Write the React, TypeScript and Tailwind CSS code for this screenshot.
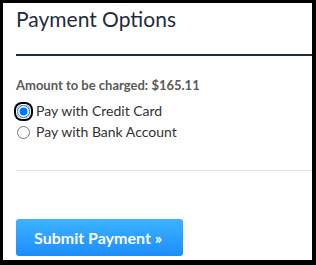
const App = () => {
  return (
    <div className="w-[316px] h-[265px] bg-black pt-[3px] pl-[3px] pr-[4px] pb-[5px] font-['Lato',sans-serif]">
      <div className="h-full bg-white pl-[13px] pt-[4px]">
        {/* Heading */}
        <h2 className="text-[21px] leading-[24px] text-[#1f2d3b] pb-[23px] border-b-2 border-[#1f2d3b]">
          Payment Options
        </h2>

        {/* Amount + methods */}
        <div className="mt-[21px] pb-[31px] border-b border-[#e3e3e3]">
          <p className="text-[13px] leading-[16px] font-bold text-[#5a5a5a]">
            Amount to be charged: $165.11
          </p>
          <div className="mt-[11px] flex flex-col gap-[7px] text-[14px] leading-[14px] text-[#333]">
            <label className="flex items-center gap-[6px] pl-[1px]">
              <span className="flex rounded-[5px] ring-2 ring-black ring-offset-[1px]">
                <input
                  type="radio"
                  name="method"
                  defaultChecked
                  className="m-0 w-[13px] h-[13px] accent-[#0075ff] outline-none"
                />
              </span>
              Pay with Credit Card
            </label>
            <label className="flex items-center gap-[6px] pl-[1px]">
              <input type="radio" name="method" className="m-0 w-[13px] h-[13px]" />
              Pay with Bank Account
            </label>
          </div>
        </div>

        {/* Submit */}
        <button className="mt-[48px] w-[167px] h-[37px] rounded-[3px] bg-gradient-to-b from-[#3db3ff] to-[#1b8dff] text-white font-bold text-[16px] text-left pl-[18px]">
          Submit Payment »
        </button>
      </div>
    </div>
  );
};

export default App;
